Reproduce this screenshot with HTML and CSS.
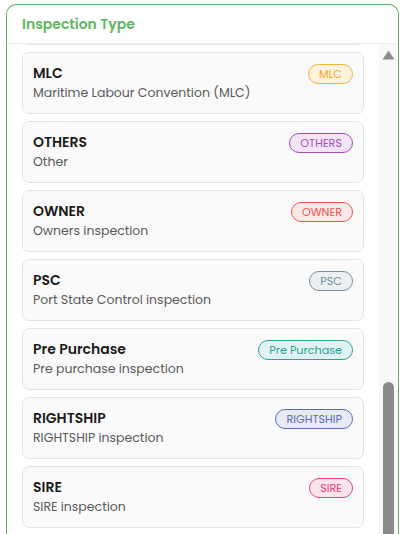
FILE: index.html
```html
<!DOCTYPE html>
<html lang="en">
<head>
<meta charset="utf-8">
<title>Inspection Type</title>
<link rel="stylesheet" href="styles.css">
</head>
<body>
<section class="panel">
  <header class="panel-header">
    <h2 class="panel-title">Inspection Type</h2>
  </header>
  <div class="panel-body">
    <div class="list-viewport">
      <ul class="type-list">
        <li class="type-card">
          <div class="type-text">
            <div class="type-name">MLC</div>
            <div class="type-desc">Maritime Labour Convention (MLC)</div>
          </div>
          <span class="badge badge-orange">MLC</span>
        </li>
        <li class="type-card">
          <div class="type-text">
            <div class="type-name">OTHERS</div>
            <div class="type-desc">Other</div>
          </div>
          <span class="badge badge-purple">OTHERS</span>
        </li>
        <li class="type-card">
          <div class="type-text">
            <div class="type-name">OWNER</div>
            <div class="type-desc">Owners inspection</div>
          </div>
          <span class="badge badge-red">OWNER</span>
        </li>
        <li class="type-card">
          <div class="type-text">
            <div class="type-name">PSC</div>
            <div class="type-desc">Port State Control inspection</div>
          </div>
          <span class="badge badge-grey">PSC</span>
        </li>
        <li class="type-card">
          <div class="type-text">
            <div class="type-name">Pre Purchase</div>
            <div class="type-desc">Pre purchase inspection</div>
          </div>
          <span class="badge badge-teal">Pre Purchase</span>
        </li>
        <li class="type-card">
          <div class="type-text">
            <div class="type-name">RIGHTSHIP</div>
            <div class="type-desc">RIGHTSHIP inspection</div>
          </div>
          <span class="badge badge-indigo">RIGHTSHIP</span>
        </li>
        <li class="type-card">
          <div class="type-text">
            <div class="type-name">SIRE</div>
            <div class="type-desc">SIRE inspection</div>
          </div>
          <span class="badge badge-pink">SIRE</span>
        </li>
      </ul>
    </div>
    <div class="scrollbar">
      <svg class="scroll-arrow" width="13" height="10" viewBox="0 0 13 10"><path d="M6.5 0.5 L12.5 9.5 L0.5 9.5 Z" fill="#8c8c8c"/></svg>
      <div class="scroll-thumb"></div>
    </div>
  </div>
</section>
</body>
</html>
```
FILE: styles.css
```css
* { box-sizing: border-box; }
html, body { height: 100%; }
body {
  margin: 0;
  overflow: hidden;
  background: #ffffff;
  font-family: "Poppins", "Inter", "Noto Sans", sans-serif;
  color: #1b1b1b;
}
.panel {
  margin: 4px 0 0 6px;
  width: 393px;
  height: 540px;
  border: 1px solid #5cb85c;
  border-bottom: none;
  border-radius: 10px 10px 0 0;
  display: flex;
  flex-direction: column;
  overflow: hidden;
}
.panel-header {
  height: 39px;
  border-bottom: 1px solid #ededed;
  padding-left: 15px;
  display: flex;
  align-items: center;
  flex: none;
}
.panel-title {
  margin: 0;
  font-size: 14px;
  font-weight: 600;
  color: #5cb85c;
}
.panel-body {
  flex: 1;
  display: flex;
  min-height: 0;
}
.list-viewport {
  flex: 1;
  overflow: hidden;
  padding: 0 15px;
}
.type-list {
  list-style: none;
  margin: 0;
  padding: 0;
  display: flex;
  flex-direction: column;
  gap: 7px;
}
.type-list::before {
  content: "";
  display: block;
  height: 8px;
  margin-top: -8px;
  border: 1px solid #e4e4e4;
  border-top: none;
  border-radius: 0 0 7px 7px;
  background: #fafafa;
}
.type-card {
  height: 62px;
  flex: none;
  border: 1px solid #e4e4e4;
  border-radius: 7px;
  background: #fafafa;
  padding: 11px 10px 0 10px;
  display: flex;
  justify-content: space-between;
  align-items: flex-start;
}
.type-name {
  font-size: 14px;
  font-weight: 600;
  line-height: 19px;
  color: #1a1a1a;
}
.type-desc {
  font-size: 12.5px;
  line-height: 20px;
  color: #595959;
}
.badge {
  height: 20px;
  padding: 0 10px;
  border-radius: 10px;
  border: 1px solid;
  font-size: 11.2px;
  line-height: 18px;
  white-space: nowrap;
}
.badge-orange { color: #f5a623; border-color: #f8b13a; background: #fff3e0; }
.badge-purple { color: #a64fc0; border-color: #ab47bc; background: #f3e5f5; }
.badge-red { color: #ef5350; border-color: #ef5350; background: #fde8e8; }
.badge-grey { color: #78909c; border-color: #78909c; background: #eceff1; }
.badge-teal { color: #26a69a; border-color: #26a69a; background: #e0f2f1; }
.badge-indigo { color: #5c6bc0; border-color: #5c6bc0; background: #e8eaf6; }
.badge-pink { color: #ec407a; border-color: #ec407a; background: #fce4ec; }
.scrollbar {
  flex: none;
  width: 19px;
  background: #f8f8f8;
  display: flex;
  flex-direction: column;
  align-items: center;
  justify-content: space-between;
  padding: 6px 0 0 0;
}
.scroll-arrow { display: block; }
.scroll-thumb {
  width: 11px;
  height: 162px;
  border-radius: 6px 6px 0 0;
  background: #8a8a8a;
}
```
